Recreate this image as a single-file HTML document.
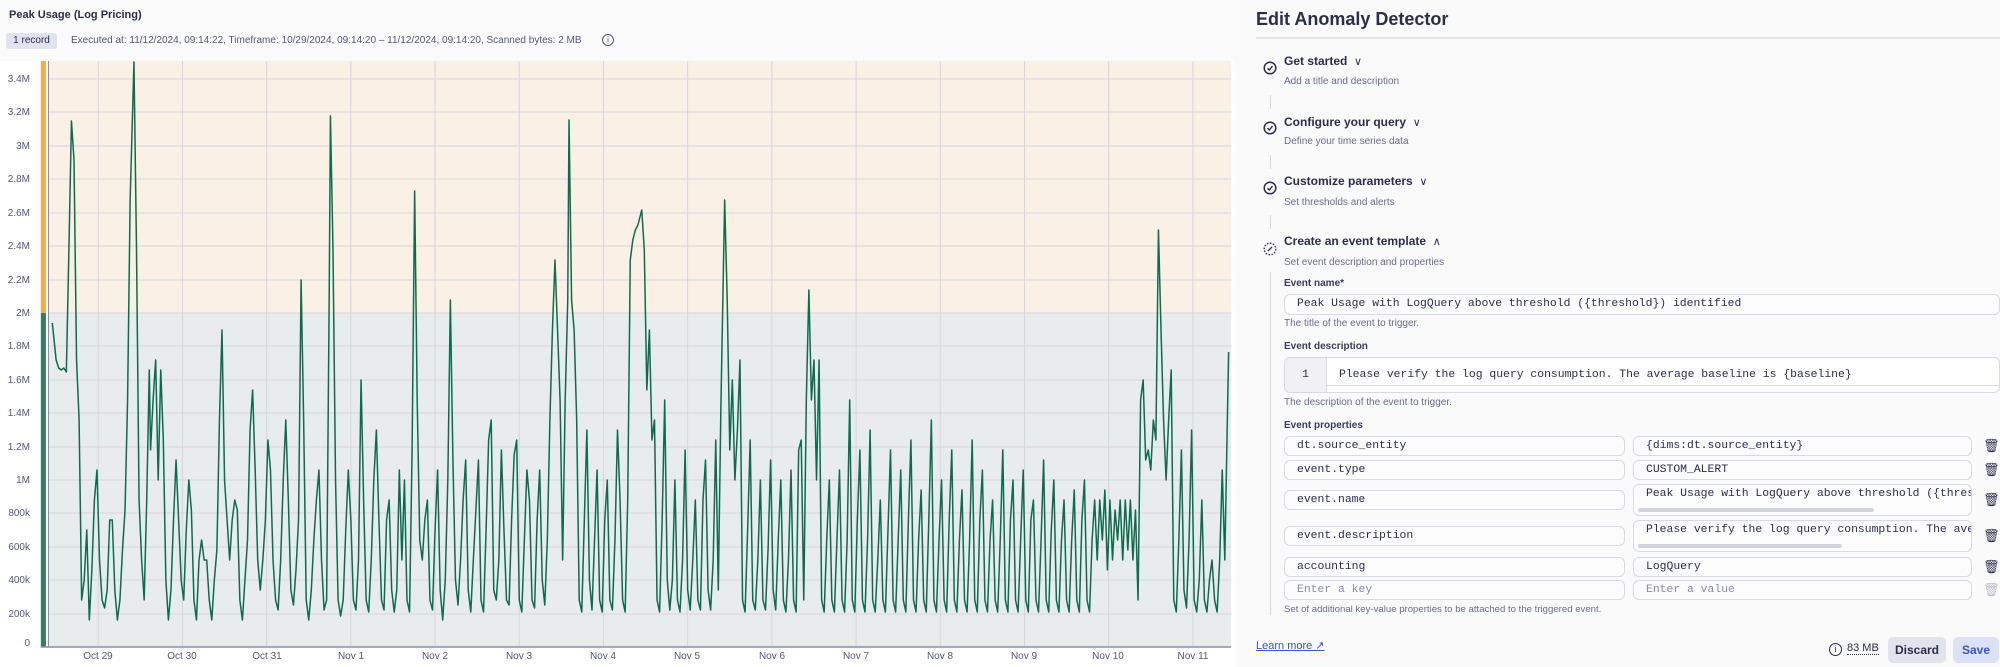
<!DOCTYPE html>
<html><head><meta charset="utf-8"><style>
*{margin:0;padding:0;box-sizing:border-box}
body{width:2000px;height:667px;overflow:hidden;background:#fff;font-family:"Liberation Sans",sans-serif;color:#2c2d4d;position:relative}
.a{position:absolute;white-space:nowrap}
.sub{font-size:10px;color:#6a6c8e}
.lbl{font-size:10px;font-weight:bold;color:#3a3c5c}
.box{position:absolute;border:1px solid #d8d9e4;border-radius:6px;background:#fcfcfd;font-family:"Liberation Mono",monospace;font-size:11.4px;color:#2c2d4d;padding-left:12px;white-space:nowrap;overflow:hidden}
.st{font-size:12px;font-weight:bold;color:#2c2d4d}
.yl{position:absolute;right:1970px;font-size:10px;color:#55577a;text-align:right;white-space:nowrap}
.xl{position:absolute;top:651px;font-size:10px;color:#55577a;width:60px;text-align:center;white-space:nowrap}
</style></head><body>
<div class="a" style="left:0;top:0;width:1235px;height:61px;background:#fbfbfc"></div>
<div class="a" style="left:9px;top:9px;font-size:11px;font-weight:bold">Peak Usage (Log Pricing)</div>
<div class="a" style="left:6px;top:33px;width:51px;height:16px;background:#e2e3ee;border-radius:3px;font-size:10px;line-height:16px;text-align:center">1 record</div>
<div class="a" style="left:71px;top:35px;font-size:10px;color:#55577a">Executed at: 11/12/2024, 09:14:22, Timeframe: 10/29/2024, 09:14:20 – 11/12/2024, 09:14:20, Scanned bytes: 2 MB</div>
<div class="a" style="left:602px;top:34px;width:12px;height:12px;border:1px solid #55577a;border-radius:50%;font-size:8px;text-align:center;line-height:10px;color:#55577a">i</div>

<svg class="a" style="left:0;top:0" width="1235" height="667" viewBox="0 0 968 667" preserveAspectRatio="none">
<rect x="38" y="61" width="927" height="252" fill="#faf0e6"/>
<rect x="38" y="313" width="927" height="334" fill="#e8ecec"/>
<rect x="32" y="61" width="4" height="252" fill="#f0ac4e"/>
<rect x="32" y="313" width="4" height="334" fill="#3d7a64"/>
<g stroke="#d8d4e0" stroke-width="1">
<line vector-effect="non-scaling-stroke" x1="38" x2="965" y1="79" y2="79"/><line vector-effect="non-scaling-stroke" x1="38" x2="965" y1="112" y2="112"/><line vector-effect="non-scaling-stroke" x1="38" x2="965" y1="146" y2="146"/><line vector-effect="non-scaling-stroke" x1="38" x2="965" y1="179" y2="179"/><line vector-effect="non-scaling-stroke" x1="38" x2="965" y1="213" y2="213"/><line vector-effect="non-scaling-stroke" x1="38" x2="965" y1="246" y2="246"/><line vector-effect="non-scaling-stroke" x1="38" x2="965" y1="280" y2="280"/><line vector-effect="non-scaling-stroke" x1="38" x2="965" y1="313" y2="313"/><line vector-effect="non-scaling-stroke" x1="38" x2="965" y1="346" y2="346"/><line vector-effect="non-scaling-stroke" x1="38" x2="965" y1="380" y2="380"/><line vector-effect="non-scaling-stroke" x1="38" x2="965" y1="413" y2="413"/><line vector-effect="non-scaling-stroke" x1="38" x2="965" y1="447" y2="447"/><line vector-effect="non-scaling-stroke" x1="38" x2="965" y1="480" y2="480"/><line vector-effect="non-scaling-stroke" x1="38" x2="965" y1="513" y2="513"/><line vector-effect="non-scaling-stroke" x1="38" x2="965" y1="547" y2="547"/><line vector-effect="non-scaling-stroke" x1="38" x2="965" y1="580" y2="580"/><line vector-effect="non-scaling-stroke" x1="38" x2="965" y1="614" y2="614"/>
<line vector-effect="non-scaling-stroke" x1="77" x2="77" y1="61" y2="647"/><line vector-effect="non-scaling-stroke" x1="143" x2="143" y1="61" y2="647"/><line vector-effect="non-scaling-stroke" x1="209" x2="209" y1="61" y2="647"/><line vector-effect="non-scaling-stroke" x1="275" x2="275" y1="61" y2="647"/><line vector-effect="non-scaling-stroke" x1="341" x2="341" y1="61" y2="647"/><line vector-effect="non-scaling-stroke" x1="407" x2="407" y1="61" y2="647"/><line vector-effect="non-scaling-stroke" x1="473" x2="473" y1="61" y2="647"/><line vector-effect="non-scaling-stroke" x1="539" x2="539" y1="61" y2="647"/><line vector-effect="non-scaling-stroke" x1="605" x2="605" y1="61" y2="647"/><line vector-effect="non-scaling-stroke" x1="671" x2="671" y1="61" y2="647"/><line vector-effect="non-scaling-stroke" x1="737" x2="737" y1="61" y2="647"/><line vector-effect="non-scaling-stroke" x1="803" x2="803" y1="61" y2="647"/><line vector-effect="non-scaling-stroke" x1="869" x2="869" y1="61" y2="647"/><line vector-effect="non-scaling-stroke" x1="935" x2="935" y1="61" y2="647"/>
</g>
<line x1="38" x2="38" y1="61" y2="647" stroke="#8a8cb0" vector-effect="non-scaling-stroke"/>
<line x1="32" x2="965" y1="647" y2="647" stroke="#8a8cb0" stroke-width="1.5" vector-effect="non-scaling-stroke"/>
<path fill="none" stroke="#0f6b4c" stroke-width="1.5" stroke-linejoin="round" vector-effect="non-scaling-stroke" d="M41,323 L44,360 46,368 48,370 50,368 52,372 54,250 56,121 58,160 60,360 62,420 64,600 66,580 68,530 70,620 72,570 74,500 76,470 78,560 80,600 82,608 84,590 86,520 88,520 90,590 92,620 94,600 96,550 98,510 100,400 102,200 105,62 107,250 109,500 111,560 113,600 115,500 117,370 118,450 120,400 122,360 124,480 126,370 128,440 130,580 132,620 134,590 136,520 138,460 140,520 142,580 144,600 146,530 148,480 150,510 152,600 154,620 156,560 158,540 160,560 162,560 164,600 166,620 168,580 170,550 172,420 174,330 176,480 178,520 180,560 182,520 184,500 186,510 188,600 190,620 194,540 196,430 198,390 200,470 202,560 204,590 206,560 208,520 210,440 212,470 214,560 216,600 218,610 220,560 222,480 224,420 226,500 228,590 230,605 232,570 234,520 236,280 238,420 240,600 242,620 244,590 246,540 248,500 250,470 252,560 254,610 256,600 258,300 259,116 261,250 263,480 265,600 267,616 269,600 271,530 273,470 275,520 277,600 279,610 281,560 283,380 285,500 287,600 289,612 291,560 293,480 295,430 297,520 299,600 301,610 303,520 305,500 307,590 309,612 311,590 313,470 315,560 317,480 319,600 321,612 323,450 325,191 327,400 329,540 331,560 333,520 335,500 337,600 339,610 341,530 343,470 345,590 347,620 349,580 351,480 353,300 355,460 357,580 359,605 361,560 363,500 365,460 367,590 369,612 371,560 373,510 375,460 377,600 379,612 381,530 383,440 385,420 387,590 389,600 391,560 393,450 395,530 397,600 399,605 401,520 403,455 405,440 407,600 409,612 411,540 413,470 415,500 417,600 419,608 421,520 423,470 425,580 427,605 429,540 431,420 433,330 435,260 437,330 439,400 441,560 443,400 445,300 446,120 448,300 450,330 452,420 454,600 456,612 458,520 460,430 462,580 464,610 466,540 468,470 470,600 472,612 474,520 476,480 478,600 480,610 482,540 484,430 486,500 488,600 490,612 492,500 494,260 496,240 498,230 500,225 503,210 505,250 507,390 509,330 511,440 513,420 515,600 517,612 519,520 521,400 523,580 525,610 527,580 529,480 531,600 533,612 535,560 537,450 539,590 541,610 543,560 545,500 547,600 549,610 551,500 553,460 555,590 557,610 559,560 561,440 563,590 565,410 568,200 570,300 572,450 574,380 576,480 578,430 580,360 582,600 584,612 586,530 588,440 590,600 592,610 594,560 596,480 598,600 600,610 602,550 604,460 606,590 608,610 610,540 612,480 614,600 616,612 618,560 620,470 622,600 624,612 626,450 628,440 630,600 632,400 634,290 636,400 638,360 640,480 642,360 644,600 646,612 648,540 650,480 652,600 654,612 656,540 658,470 660,600 662,612 664,540 666,400 668,600 670,612 672,520 674,450 676,600 678,612 680,540 682,430 684,600 686,612 688,560 690,500 692,600 694,612 696,530 698,450 700,600 702,612 704,540 706,470 708,600 710,612 712,520 714,440 716,600 718,612 720,540 722,490 724,600 726,612 728,520 730,420 732,600 734,612 736,540 738,480 740,600 742,612 744,520 746,450 748,600 750,612 752,540 754,490 756,600 758,612 760,540 762,440 764,600 766,612 768,520 770,470 772,600 774,612 776,540 778,500 780,600 782,612 784,540 786,450 788,600 790,612 792,520 794,480 796,600 798,612 800,540 802,470 804,600 806,612 808,520 810,500 812,600 814,612 816,540 818,460 820,600 822,612 824,530 826,480 828,600 830,612 832,540 834,500 836,600 838,612 840,540 842,490 844,600 846,612 848,520 850,480 852,600 854,612 856,540 858,500 860,560 862,500 864,540 866,490 868,570 870,500 872,560 874,510 876,540 878,500 880,560 882,500 884,550 886,500 888,560 890,510 892,600 894,400 896,380 898,460 900,450 902,470 904,420 906,440 908,230 910,330 912,420 914,480 916,420 918,370 920,600 922,612 924,540 926,450 928,590 930,608 932,540 934,430 936,600 938,612 940,580 942,500 944,600 946,612 948,580 950,560 952,600 954,612 956,560 958,470 960,560 962,420 963,352"/>
</svg>
<div class="yl" style="top:74px">3.4M</div><div class="yl" style="top:107px">3.2M</div><div class="yl" style="top:141px">3M</div><div class="yl" style="top:174px">2.8M</div><div class="yl" style="top:208px">2.6M</div><div class="yl" style="top:241px">2.4M</div><div class="yl" style="top:275px">2.2M</div><div class="yl" style="top:308px">2M</div><div class="yl" style="top:341px">1.8M</div><div class="yl" style="top:375px">1.6M</div><div class="yl" style="top:408px">1.4M</div><div class="yl" style="top:442px">1.2M</div><div class="yl" style="top:475px">1M</div><div class="yl" style="top:508px">800k</div><div class="yl" style="top:542px">600k</div><div class="yl" style="top:575px">400k</div><div class="yl" style="top:609px">200k</div><div class="yl" style="top:638px">0</div>
<div class="xl" style="left:68px">Oct 29</div><div class="xl" style="left:152px">Oct 30</div><div class="xl" style="left:237px">Oct 31</div><div class="xl" style="left:321px">Nov 1</div><div class="xl" style="left:405px">Nov 2</div><div class="xl" style="left:489px">Nov 3</div><div class="xl" style="left:573px">Nov 4</div><div class="xl" style="left:657px">Nov 5</div><div class="xl" style="left:742px">Nov 6</div><div class="xl" style="left:826px">Nov 7</div><div class="xl" style="left:910px">Nov 8</div><div class="xl" style="left:994px">Nov 9</div><div class="xl" style="left:1078px">Nov 10</div><div class="xl" style="left:1163px">Nov 11</div>

<div class="a" style="left:1235px;top:0;width:765px;height:667px;background:#fafafb"></div>
<div class="a" style="left:1256px;top:9px;font-size:18px;font-weight:bold;color:#2c2d4d">Edit Anomaly Detector</div>
<div class="a" style="left:1256px;top:37px;width:744px;height:2px;background:#e4e5ee"></div>

<svg class="a" style="left:1263px;top:61px" width="14" height="14" viewBox="0 0 14 14"><circle cx="7" cy="7" r="5.8" fill="none" stroke="#2c2d4d" stroke-width="1.5"/><path d="M4.5 7.3 L6.3 9 L9.5 5" fill="none" stroke="#2c2d4d" stroke-width="1.4"/></svg>
<div class="a st" style="left:1284px;top:54px">Get started &nbsp;<span style="font-weight:normal;font-size:11px">∨</span></div>
<div class="a sub" style="left:1284px;top:76px">Add a title and description</div>
<div class="a" style="left:1270px;top:95px;width:1px;height:14px;background:#d8d9e4"></div>

<svg class="a" style="left:1263px;top:121px" width="14" height="14" viewBox="0 0 14 14"><circle cx="7" cy="7" r="5.8" fill="none" stroke="#2c2d4d" stroke-width="1.5"/><path d="M4.5 7.3 L6.3 9 L9.5 5" fill="none" stroke="#2c2d4d" stroke-width="1.4"/></svg>
<div class="a st" style="left:1284px;top:115px">Configure your query &nbsp;<span style="font-weight:normal;font-size:11px">∨</span></div>
<div class="a sub" style="left:1284px;top:136px">Define your time series data</div>
<div class="a" style="left:1270px;top:155px;width:1px;height:14px;background:#d8d9e4"></div>

<svg class="a" style="left:1263px;top:181px" width="14" height="14" viewBox="0 0 14 14"><circle cx="7" cy="7" r="5.8" fill="none" stroke="#2c2d4d" stroke-width="1.5"/><path d="M4.5 7.3 L6.3 9 L9.5 5" fill="none" stroke="#2c2d4d" stroke-width="1.4"/></svg>
<div class="a st" style="left:1284px;top:174px">Customize parameters &nbsp;<span style="font-weight:normal;font-size:11px">∨</span></div>
<div class="a sub" style="left:1284px;top:197px">Set thresholds and alerts</div>
<div class="a" style="left:1270px;top:215px;width:1px;height:14px;background:#d8d9e4"></div>

<svg class="a" style="left:1263px;top:242px" width="14" height="14" viewBox="0 0 14 14"><circle cx="7" cy="7" r="5.8" fill="none" stroke="#2c2d4d" stroke-width="1.3" stroke-dasharray="1.6 1.4"/><path d="M5 9 L9 5" fill="none" stroke="#2c2d4d" stroke-width="1.3"/></svg>
<div class="a st" style="left:1284px;top:234px">Create an event template &nbsp;<span style="font-weight:normal;font-size:11px">∧</span></div>
<div class="a sub" style="left:1284px;top:257px">Set event description and properties</div>
<div class="a" style="left:1270px;top:272px;width:1px;height:343px;background:#d8d9e4"></div>

<div class="a lbl" style="left:1284px;top:278px">Event name*</div>
<div class="box" style="left:1284px;top:294px;width:716px;height:21px;line-height:19px">Peak Usage with LogQuery above threshold ({threshold}) identified</div>
<div class="a sub" style="left:1284px;top:318px">The title of the event to trigger.</div>
<div class="a lbl" style="left:1284px;top:341px">Event description</div>
<div class="box" style="left:1284px;top:357px;width:716px;height:36px;padding-left:0;background:#fff"><div style="position:absolute;left:0;top:0;width:42px;height:34px;background:#f1f1f5;border-right:1px solid #d8d9e4;text-align:center;line-height:34px">1</div><div style="position:absolute;left:54px;top:0;line-height:34px">Please verify the log query consumption. The average baseline is {baseline}</div><div style="position:absolute;left:42px;right:0;top:27px;border-top:1px solid #d8d9e4"></div></div>
<div class="a sub" style="left:1284px;top:397px">The description of the event to trigger.</div>
<div class="a lbl" style="left:1284px;top:420px">Event properties</div>

<div class="box" style="left:1284px;top:436px;width:341px;height:20px;line-height:18px">dt.source_entity</div>
<div class="box" style="left:1633px;top:436px;width:339px;height:20px;line-height:18px">{dims:dt.source_entity}</div>
<div class="a" style="left:1983px;top:438px;font-size:13px">🗑</div>
<div class="box" style="left:1284px;top:460px;width:341px;height:20px;line-height:18px">event.type</div>
<div class="box" style="left:1633px;top:460px;width:339px;height:20px;line-height:18px">CUSTOM_ALERT</div>
<div class="a" style="left:1983px;top:462px;font-size:13px">🗑</div>
<div class="box" style="left:1284px;top:490px;width:341px;height:20px;line-height:18px">event.name</div>
<div class="box" style="left:1633px;top:484px;width:339px;height:32px;line-height:18px">Peak Usage with LogQuery above threshold ({threshold}) identified<div style="position:absolute;left:4px;top:23px;width:236px;height:4px;border-radius:2px;background:#d2d3de"></div></div>
<div class="a" style="left:1983px;top:492px;font-size:13px">🗑</div>
<div class="box" style="left:1284px;top:526px;width:341px;height:20px;line-height:18px">event.description</div>
<div class="box" style="left:1633px;top:520px;width:339px;height:32px;line-height:18px">Please verify the log query consumption. The average baseline<div style="position:absolute;left:4px;top:23px;width:204px;height:4px;border-radius:2px;background:#d2d3de"></div></div>
<div class="a" style="left:1983px;top:528px;font-size:13px">🗑</div>
<div class="box" style="left:1284px;top:557px;width:341px;height:20px;line-height:18px">accounting</div>
<div class="box" style="left:1633px;top:557px;width:339px;height:20px;line-height:18px">LogQuery</div>
<div class="a" style="left:1983px;top:559px;font-size:13px">🗑</div>
<div class="box" style="left:1284px;top:580px;width:341px;height:20px;line-height:18px;color:#8a8cab">Enter a key</div>
<div class="box" style="left:1633px;top:580px;width:339px;height:20px;line-height:18px;color:#8a8cab">Enter a value</div>
<div class="a" style="left:1983px;top:582px;font-size:13px;opacity:.3">🗑</div>
<div class="a sub" style="left:1284px;top:604px;font-size:9.6px">Set of additional key-value properties to be attached to the triggered event.</div>

<div class="a" style="left:1256px;top:639px;font-size:11px;color:#3b54c9;text-decoration:underline">Learn more ↗</div>
<div class="a" style="left:1829px;top:643px;width:13px;height:13px;border:1px solid #2c2d4d;border-radius:50%;font-size:9px;text-align:center;line-height:11px">i</div>
<div class="a" style="left:1847px;top:642px;font-size:11px;border-bottom:1px dotted #2c2d4d">83 MB</div>
<div class="a" style="left:1888px;top:637px;width:58px;height:26px;background:#e2e3ec;border-radius:5px;font-size:12px;font-weight:bold;line-height:26px;text-align:center">Discard</div>
<div class="a" style="left:1953px;top:637px;width:46px;height:26px;background:#dde1f8;border-radius:5px;font-size:12px;font-weight:bold;line-height:26px;text-align:center;color:#3b54c9">Save</div>
</body></html>
